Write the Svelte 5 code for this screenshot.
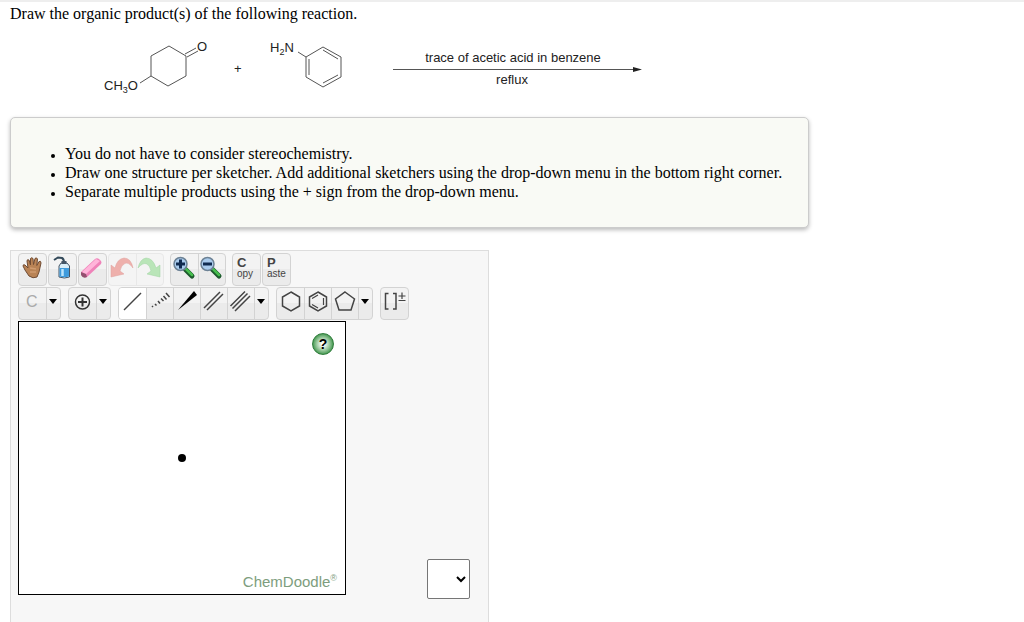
<script>
  const notes = [
    'You do not have to consider stereochemistry.',
    'Draw one structure per sketcher. Add additional sketchers using the drop-down menu in the bottom right corner.',
    'Separate multiple products using the + sign from the drop-down menu.'
  ];

  // each inner array is one joined group of buttons
  const editTools = [
    [[{ id: 'move', label: 'Move' }], [{ id: 'clear', label: 'Clear' }], [{ id: 'erase', label: 'Erase' }], [{ id: 'undo', label: 'Undo', off: true }, { id: 'redo', label: 'Redo', off: true }]],
    [[{ id: 'zoomin', label: 'Zoom in' }, { id: 'zoomout', label: 'Zoom out' }]],
    [[{ id: 'copy', label: 'Copy' }], [{ id: 'paste', label: 'Paste' }]]
  ];

  const drawTools = [
    [{ id: 'element', label: 'Set element' }, { id: 'more', label: 'More elements' }],
    [{ id: 'charge', label: 'Increase charge' }, { id: 'more', label: 'More attributes' }],
    [
      { id: 'single', label: 'Single bond' },
      { id: 'recessed', label: 'Recessed bond' },
      { id: 'wedge', label: 'Protruding bond' },
      { id: 'double', label: 'Double bond' },
      { id: 'triple', label: 'Triple bond' },
      { id: 'more', label: 'More bonds' }
    ],
    [
      { id: 'hexagon', label: 'Cyclohexane ring' },
      { id: 'benzene', label: 'Benzene ring' },
      { id: 'pentagon', label: 'Cyclopentane ring' },
      { id: 'more', label: 'More rings' }
    ],
    [{ id: 'bracket', label: 'Brackets and charge' }]
  ];

  let active = $state('single');
  let joiner = $state('');
</script>

{#snippet icon(id)}
  <svg class="icon" viewBox="0 0 27 31" aria-hidden="true">
    {#if id === 'move'}
      <path d="M10 22 L6 16 L4 12 Q4 10 6 11 L9 14 L8 7 Q8 5 10 6 L11.500 11 L11.500 4.500 Q12.500 3 14 4.500 L14.500 10.500 L16 4.500 Q17.500 3 18.500 5 L17.800 11.500 L20 7.500 Q22 6.500 22 9 L20 18 L18 23 Q14 25 10 22 Z" fill="#b98355" stroke="#704c34" stroke-width="1" />
      <path d="M11 14 L17 15 M11 18 L17 18" stroke="#d09c70" stroke-width="1.500" />
    {:else if id === 'clear'}
      <path d="M5 6 L9 3.500 L13 4 Q15 5 15 9" fill="none" stroke="#334a5a" stroke-width="2" />
      <path d="M12 9 H18 L20.500 12 V23 Q15.500 25 10 23 V12 Z" fill="#d9edf8" stroke="#456" />
      <path d="M10.500 14 H20 V22.500 Q15 24 10.500 22.500 Z" fill="#3e9bdd" />
      <path d="M13.500 15 V22" stroke="#bce4fb" stroke-width="2.500" />
      <rect x="12.500" y="7" width="5" height="3" fill="#456" />
    {:else if id === 'erase'}
      <path d="M16 5 Q18 3.500 20 5 L22 7 Q23 8 22 10 L8 23 Q6 24 3 22 L2 18 Z" fill="#ef83b9" />
      <path d="M3 18 L17 5 L21 7 L7 20 Z" fill="#ffb5da" />
      <path d="M2 18 L7 20 L8 23 Q4 25 2 21 Z" fill="#92506f" />
    {:else if id === 'undo'}
      <path d="M2 11 L6 14 Q8 5 15 4 Q22 4 24 14 Q19 7 15 10 Q12 12 11 17 L15 20 L2 23 Z" fill="#eeb0ac" stroke="#dfa19d" stroke-width=".5" />
    {:else if id === 'redo'}
      <path d="M24 11 L20 14 Q17 4 10 4 Q4 5 2 14 Q7 8 11 10 Q14 12 15 17 L11 20 L24 23 Z" fill="#b9e5b8" stroke="#9fd3a0" stroke-width=".5" />
    {:else if id === 'zoomin' || id === 'zoomout'}
      <path d="M14 15 L21 22" stroke="#1c592c" stroke-width="5" stroke-linecap="round" />
      <path d="M15 15 L21 21" stroke="#45bd4c" stroke-width="2.500" stroke-linecap="round" />
      <circle cx="9.500" cy="10" r="6.500" fill="#a9cbed" stroke="#6d8295" stroke-width="1.500" />
      <path d={id === 'zoomin' ? 'M5 10 H14 M9.5 5.5 V14.5' : 'M5 10 H14'} stroke="#102b50" stroke-width="3" />
    {:else if id === 'charge'}
      <circle cx="13.500" cy="14" r="7" fill="none" stroke="#333" stroke-width="1.500" />
      <path d="M9 14 H18 M13.500 9.500 V18.500" stroke="#333" stroke-width="2" />
    {:else if id === 'single'}
      <path d="M5 22 L22 5" stroke="#444" stroke-width="1.500" />
    {:else if id === 'recessed'}
      <path d="M6 18 L7 19 M9 16 L10.500 17.500 M12 13 L14 15.500 M15 10.500 L17.500 13 M17.500 8 L20.500 11.500 M20 5 L23.500 9" stroke="#444" stroke-width="1.500" />
    {:else if id === 'wedge'}
      <path d="M5 22 L21 3 L24 7 Z" fill="#000" />
    {:else if id === 'double'}
      <path d="M4 20 L20 4 M7 22 L23 6" stroke="#444" stroke-width="1.500" />
    {:else if id === 'triple'}
      <path d="M3.500 18 L18 3.500 M5.500 20.500 L20.500 5.500 M8 23 L23 8" stroke="#444" stroke-width="1.500" />
    {:else if id === 'hexagon' || id === 'benzene'}
      <path d="M14 4 L22.500 9 V18 L14 23 L5.500 18 V9 Z" fill="none" stroke="#444" stroke-width="1.500" />
      {#if id === 'benzene'}
        <path d="M8 10.500 L14 7 M19.500 10 V17 M14 20 L8 16.500" stroke="#444" stroke-width="1.200" />
      {/if}
    {:else if id === 'pentagon'}
      <path d="M14 4 L23.500 11 L20 22 H8 L4.500 11 Z" fill="none" stroke="#444" stroke-width="1.500" />
    {:else if id === 'bracket'}
      <path d="M7.500 5.500 H4.500 V21 H7.500 M12 5.500 H15 V21 H12" fill="none" stroke="#444" stroke-width="1.500" />
      <path d="M17.500 8 H24.500 M21 4.500 V11 M17.500 12.500 H24.500" stroke="#444" stroke-width="1.200" />
    {/if}
  </svg>
{/snippet}

{#snippet group(tools)}
  <div class="group">
    {#each tools as tool}
      <button
        type="button"
        class={tool.id}
        class:active={active === tool.id}
        disabled={tool.off}
        aria-label={tool.label}
        onclick={() => tool.id !== 'more' && (active = tool.id)}
      >
        {#if tool.id === 'more'}
          <svg class="arrow" viewBox="0 0 14 31" aria-hidden="true"><path d="M3 11 H11 L7 16 Z" /></svg>
        {:else if tool.id === 'element'}
          C
        {:else if tool.id === 'copy'}
          <b>C</b><span>opy</span>
        {:else if tool.id === 'paste'}
          <b>P</b><span>aste</span>
        {:else}
          {@render icon(tool.id)}
        {/if}
      </button>
    {/each}
  </div>
{/snippet}

<main>
  <p class="question">Draw the organic product(s) of the following reaction.</p>

  <svg class="reaction" viewBox="0 0 640 84" role="img" aria-label="Reaction scheme">
    <g class="bonds">
      <path d="M159 18 L176 28 V48 L158 58 L141 48 V28 Z M141 48 L130 55" />
      <path d="M175 26 L186 20 M177 29 L188 23" />
      <path d="M313 19 L331 29 V49 L313 59 L296 49 V29 Z M296 29 L288 24" />
      <path d="M299 31 V47 M313 22 L328 31 M328 47 L313 55" />
    </g>
    <g class="atoms">
      <text x="94" y="62">CH<tspan class="sub" dy="3">3</tspan><tspan dy="-3">O</tspan></text>
      <text x="187" y="23">O</text>
      <text x="260" y="24">H<tspan class="sub" dy="3">2</tspan><tspan dy="-3">N</tspan></text>
      <text x="224" y="45">+</text>
      <text x="503" y="34" text-anchor="middle">trace of acetic acid in benzene</text>
      <text x="502" y="56" text-anchor="middle">reflux</text>
    </g>
    <path d="M383 41.500 H626" stroke="#555" />
    <path d="M623 39 L632 41.500 L623 44 Z" fill="#222" />
  </svg>

  <ul class="notes">
    {#each notes as note}
      <li>{note}</li>
    {/each}
  </ul>

  <section class="panel">
    <div class="toolbar edit">
      {#each editTools as set}
        <div class="set">
          {#each set as tools}
            {@render group(tools)}
          {/each}
        </div>
      {/each}
    </div>
    <div class="toolbar draw">
      {#each drawTools as tools}
        {@render group(tools)}
      {/each}
    </div>

    <div class="bottom">
      <div class="canvas">
        <button type="button" class="help" aria-label="Help">?</button>
        <span class="atom"></span>
        <span class="brand">ChemDoodle<sup>®</sup></span>
      </div>
      <select bind:value={joiner} aria-label="Add sketcher">
        <option value=""></option>
        <option value="+">+</option>
      </select>
    </div>
  </section>
</main>

<style>
  :global(body) {
    margin: 0;
    background: #fff;
    color: #000;
    font-family: 'Liberation Serif', 'Times New Roman', serif;
    font-size: 16px;
  }

  main {
    display: flex;
    flex-direction: column;
    align-items: flex-start;
    box-sizing: border-box;
    min-height: 100vh;
    padding: 3px 10px 0;
    border-top: 2px solid #eee;
  }

  .question {
    margin: 0;
  }

  .reaction {
    width: 640px;
    max-width: 100%;
    margin: 5px 0;
  }

  .bonds {
    fill: none;
    stroke: #555;
    stroke-width: 1;
  }

  .atoms {
    fill: #222;
    font-family: 'Liberation Sans', Arial, sans-serif;
    font-size: 13px;
  }

  .sub {
    font-size: 9px;
  }

  .notes {
    box-sizing: border-box;
    margin: 0 0 22px;
    padding: 26px 26px 26px 54px;
    border: 1px solid #ccc;
    border-radius: 5px;
    background: #f9faf5;
    box-shadow: 0 2px 4px #bbb;
    line-height: 19px;
  }

  .notes li::marker {
    font-size: 12px;
  }

  .panel {
    flex: 1;
    box-sizing: border-box;
    width: 479px;
    max-width: 100%;
    padding: 2px 7px 23px;
    border: 1px solid #ddd;
    border-bottom: 0;
    background: #f7f7f7;
  }

  .toolbar,
  .set,
  .group {
    display: flex;
  }

  .toolbar {
    margin-bottom: 1px;
  }

  .edit {
    gap: 6px;
  }

  .set {
    gap: 1px;
  }

  .draw {
    gap: 7px;
  }

  .group {
    overflow: hidden;
    border: 1px solid #d3d3d3;
    border-radius: 4px;
    background: linear-gradient(#f3f3f3 50%, #ebebeb 50%);
  }

  .group button {
    display: flex;
    flex-direction: column;
    align-items: flex-start;
    justify-content: center;
    box-sizing: border-box;
    width: 27px;
    height: 31px;
    padding: 0;
    border: 0;
    background: none;
    color: #444;
    font-family: 'Liberation Sans', Arial, sans-serif;
    font-size: 10px;
    line-height: 10px;
  }

  .group button + button {
    box-shadow: inset 1px 0 #d3d3d3;
  }

  .group:has(button:disabled) {
    border-color: #e8e8e8;
    background: #f4f4f4;
  }

  .group button:disabled + button {
    box-shadow: inset 1px 0 #e8e8e8;
  }

  .group .active {
    background: #fff;
  }

  .group .more {
    width: 14px;
  }

  .group .element {
    padding: 0 0 4px 7px;
    color: #aaa;
    font-size: 16px;
  }

  .group .copy,
  .group .paste {
    padding: 0 0 4px 4px;
  }

  .group b {
    font-size: 13px;
    line-height: 12px;
  }

  .icon {
    width: 27px;
    height: 31px;
  }

  .arrow {
    width: 14px;
    height: 31px;
  }

  .bottom {
    display: flex;
    align-items: flex-end;
    gap: 81px;
  }

  .canvas {
    display: grid;
    position: relative;
    place-items: center;
    box-sizing: border-box;
    width: 328px;
    height: 274px;
    margin-bottom: 4px;
    border: 1px solid #000;
    background: #fff;
  }

  .atom {
    width: 8px;
    height: 8px;
    border-radius: 50%;
    background: #000;
  }

  .help {
    position: absolute;
    top: 11px;
    right: 11px;
    width: 22px;
    height: 22px;
    padding: 0;
    border: 1px solid #2f7d3b;
    border-radius: 50%;
    background: radial-gradient(#fff 10%, #9cca9f 45%, #2f8b3d 80%);
    color: #000;
    font: bold 14px 'Liberation Sans', Arial, sans-serif;
  }

  .brand {
    position: absolute;
    right: 8px;
    bottom: 4px;
    color: #7d9d7d;
    font-family: 'Liberation Sans', Arial, sans-serif;
    font-size: 15px;
  }

  .brand sup {
    font-size: 9px;
    line-height: 1;
  }

  select {
    width: 43px;
    height: 40px;
    border: 1px solid #767676;
    border-radius: 2px;
    background: #fff;
  }
</style>
